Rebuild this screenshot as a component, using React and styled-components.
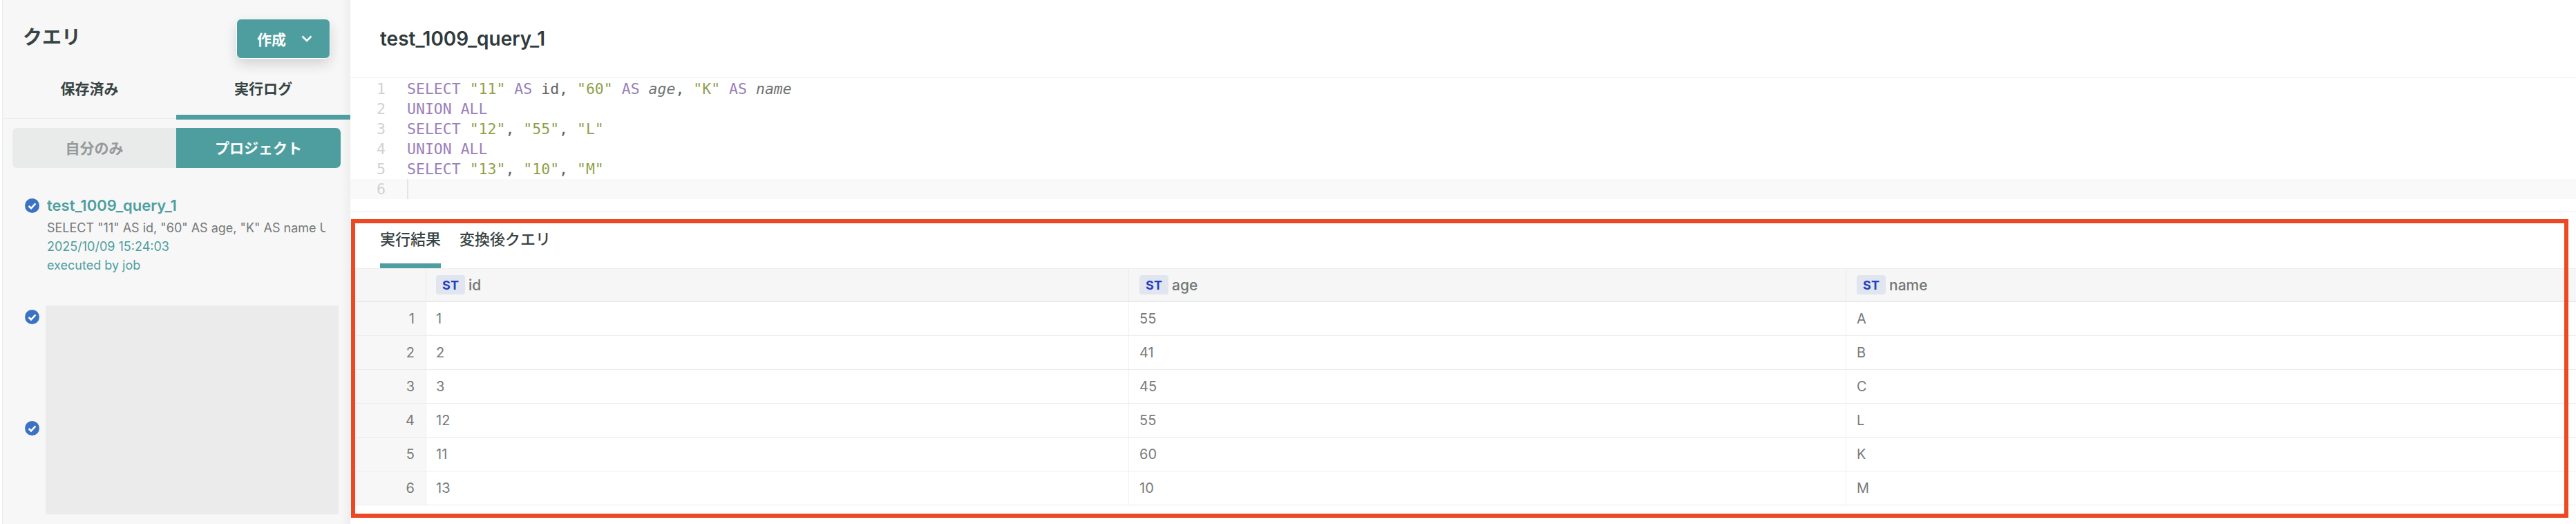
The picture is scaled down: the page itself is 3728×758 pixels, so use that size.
import React from 'react'
import styled, { createGlobalStyle } from 'styled-components'

const TEAL = '#4e9ea0'
const FONT = `Inter, "Noto Sans CJK JP", sans-serif`

const GlobalStyle = createGlobalStyle`
  html, body {
    margin: 0;
    padding: 0;
    background: #fff;
    font-family: ${FONT};
  }
  * { box-sizing: border-box; }
`

const Page = styled.div`
  position: relative;
  width: 3728px;
  height: 758px;
  display: flex;
  overflow: hidden;
  background: #fff;
`

const Sidebar = styled.aside`
  width: 504px;
  margin-left: 3px;
  flex: none;
  background: #f7f7f7;
  border-left: 1px solid #e9eded;
  box-shadow: inset -20px 0 14px -16px rgba(0, 0, 0, 0.05);
`

const SideHeader = styled.div`
  height: 85px;
  padding: 27px 29px 0 29px;
  display: flex;
  justify-content: space-between;
  align-items: flex-start;
`

const SideTitle = styled.h1`
  margin: 11px 0 0;
  font-size: 28px;
  line-height: 32px;
  font-weight: 700;
  color: #384343;
`

const CreateButton = styled.button`
  width: 136px;
  height: 58px;
  padding: 0 0 0 29px;
  display: flex;
  align-items: center;
  gap: 22px;
  border: 1px solid #fff;
  border-radius: 7px;
  background: ${TEAL};
  color: #fff;
  font-family: ${FONT};
  font-size: 21px;
  font-weight: 700;
  box-shadow: 0 8px 18px rgba(0, 0, 0, 0.14);
`

const SideTabs = styled.div`
  height: 87px;
  display: grid;
  grid-template-columns: 251px 252px;
  border-bottom: 1px solid #ebeded;
`

const SideTab = styled.div`
  display: flex;
  align-items: center;
  justify-content: center;
  padding-top: 3px;
  margin-bottom: -2px;
  font-size: 21px;
  font-weight: 700;
  color: #384343;
  border-bottom: 7px solid ${p => (p.$active ? TEAL : 'transparent')};
`

const Toggle = styled.div`
  margin: 13px 14px 0 14px;
  height: 58px;
  display: grid;
  grid-template-columns: 237px 238px;
`

const ToggleItem = styled.div`
  display: flex;
  align-items: center;
  justify-content: center;
  padding-bottom: 2px;
  font-size: 21px;
  font-weight: 700;
  background: ${p => (p.$active ? TEAL : '#e9ebeb')};
  color: ${p => (p.$active ? '#fff' : '#959a9a')};
  border-radius: ${p => (p.$active ? '0 7px 7px 0' : '7px 0 0 7px')};
`

const LogList = styled.div`
  position: relative;
  padding-top: 27px;
`

const LogItem = styled.div`
  height: 161px;
  padding: 13px 0 0 32px;
  display: flex;
  gap: 11px;
`

const StatusIcon = styled.svg`
  flex: none;
  width: 21px;
  height: 21px;
  margin-top: 4px;
`

const LogBody = styled.div`
  width: 403px;
  overflow: hidden;
`

const LogName = styled.div`
  margin-top: 1px;
  font-size: 22px;
  line-height: 27px;
  font-weight: 600;
  color: ${TEAL};
`

const LogLine = styled.div`
  margin-top: ${p => (p.$first ? '5px' : '0')};
  font-size: 18px;
  line-height: 27px;
  white-space: nowrap;
  color: ${p => (p.$accent ? TEAL : '#757878')};
`

const Redaction = styled.div`
  position: absolute;
  left: 62px;
  top: 199px;
  width: 424px;
  height: 302px;
  background: #ebebeb;
`

const Main = styled.main`
  flex: 1;
  min-width: 0;
  display: flex;
  flex-direction: column;
`

const MainHeader = styled.header`
  height: 113px;
  padding-left: 43px;
  display: flex;
  align-items: center;
  border-bottom: 1px solid #eeeeee;
`

const QueryTitle = styled.h2`
  margin: 0;
  font-size: 28px;
  font-weight: 600;
  color: #303a3a;
`

const Editor = styled.div`
  height: 194px;
  padding-top: 1px;
  border-bottom: 1px solid #eeeeee;
  font-family: "DejaVu Sans Mono", monospace;
  font-size: 21.5px;
  line-height: 29px;
`

const CodeRow = styled.div`
  height: 29px;
  display: flex;
  background: ${p => (p.$current ? '#f9f9f9' : 'transparent')};
`

const Gutter = styled.span`
  width: 82px;
  flex: none;
  padding-left: 38px;
  color: #d0d2d2;
`

const Code = styled.span`
  white-space: pre;
  color: #606464;
  border-left: ${p => (p.$current ? '2px solid #e4e4e4' : 'none')};
`

const Kw = styled.span`
  color: #9a80bb;
`

const Str = styled.span`
  color: #8f9f4b;
`

const Alias = styled.span`
  font-style: italic;
  color: #707474;
`

const ResultTabs = styled.div`
  height: 81px;
  padding-left: 43px;
  display: flex;
  gap: 27px;
`

const ResultTab = styled.div`
  height: 81px;
  padding-top: 25px;
  font-size: 22px;
  line-height: 28px;
  font-weight: 500;
  color: #384343;
  border-bottom: 7px solid ${p => (p.$active ? TEAL : 'transparent')};
`

const ResultGrid = styled.div`
  display: grid;
  grid-template-columns: 109px 1017px 1038px 1fr;
  grid-auto-rows: 49px;
`

const HeadCell = styled.div`
  display: flex;
  align-items: center;
  gap: 5px;
  padding-left: ${p => (p.$lead ? '14px' : '15px')};
  background: #f6f6f6;
  border-top: 1px solid #eeeeee;
  border-bottom: 2px solid #e9ebeb;
  border-left: ${p => (p.$corner ? 'none' : '1px solid #ebebeb')};
  font-size: 21px;
  font-weight: 500;
  color: #727676;
`

const TypeBadge = styled.span`
  width: 42px;
  height: 28px;
  display: flex;
  align-items: center;
  justify-content: center;
  border-radius: 4px;
  background: #e1e5f0;
  color: #2141bd;
  font-size: 18px;
  font-weight: 700;
`

const RowNumber = styled.div`
  display: flex;
  align-items: center;
  justify-content: flex-end;
  padding-right: 16px;
  background: #f7f7f7;
  border-bottom: 1px solid #ececec;
  font-size: 20px;
  color: #777b7b;
`

const Cell = styled.div`
  display: flex;
  align-items: center;
  padding-left: ${p => (p.$lead ? '14px' : '15px')};
  border-left: 1px solid #f0f0f0;
  border-bottom: 1px solid #ececec;
  font-size: 20px;
  color: #777b7b;
`

const Highlight = styled.div`
  position: absolute;
  left: 508px;
  top: 317px;
  width: 3209px;
  height: 432px;
  border: 6px solid #ee4823;
  pointer-events: none;
`

const Check = () => (
  <StatusIcon viewBox="0 0 21 21">
    <circle cx="10.5" cy="10.5" r="10.5" fill="#3b72c4" />
    <path d="M5.6 11l3.4 3.3 6.4-7" fill="none" stroke="#fff" strokeWidth="2.6" />
  </StatusIcon>
)

const Chevron = () => (
  <svg width="16" height="10" viewBox="0 0 16 10">
    <path d="M1.5 1.5L8 8l6.5-6.5" fill="none" stroke="#fff" strokeWidth="2.6" />
  </svg>
)

const rows = [
  ['1', '55', 'A'],
  ['2', '41', 'B'],
  ['3', '45', 'C'],
  ['12', '55', 'L'],
  ['11', '60', 'K'],
  ['13', '10', 'M'],
]

const codeLines = [
  <>
    <Kw>SELECT</Kw> <Str>"11"</Str> <Kw>AS</Kw> id, <Str>"60"</Str> <Kw>AS</Kw> <Alias>age</Alias>, <Str>"K"</Str> <Kw>AS</Kw> <Alias>name</Alias>
  </>,
  <Kw>UNION ALL</Kw>,
  <>
    <Kw>SELECT</Kw> <Str>"12"</Str>, <Str>"55"</Str>, <Str>"L"</Str>
  </>,
  <Kw>UNION ALL</Kw>,
  <>
    <Kw>SELECT</Kw> <Str>"13"</Str>, <Str>"10"</Str>, <Str>"M"</Str>
  </>,
  null,
]

export default function App() {
  return (
    <Page>
      <GlobalStyle />
      <Sidebar>
        <SideHeader>
          <SideTitle>クエリ</SideTitle>
          <CreateButton>
            作成
            <Chevron />
          </CreateButton>
        </SideHeader>
        <SideTabs>
          <SideTab>保存済み</SideTab>
          <SideTab $active>実行ログ</SideTab>
        </SideTabs>
        <Toggle>
          <ToggleItem>自分のみ</ToggleItem>
          <ToggleItem $active>プロジェクト</ToggleItem>
        </Toggle>
        <LogList>
          <LogItem>
            <Check />
            <LogBody>
              <LogName>test_1009_query_1</LogName>
              <LogLine $first>SELECT "11" AS id, "60" AS age, "K" AS name UNION ALL</LogLine>
              <LogLine $accent>2025/10/09 15:24:03</LogLine>
              <LogLine $accent>executed by job</LogLine>
            </LogBody>
          </LogItem>
          <LogItem>
            <Check />
          </LogItem>
          <LogItem>
            <Check />
          </LogItem>
          <Redaction />
        </LogList>
      </Sidebar>
      <Main>
        <MainHeader>
          <QueryTitle>test_1009_query_1</QueryTitle>
        </MainHeader>
        <Editor>
          {codeLines.map((line, i) => (
            <CodeRow key={i} $current={line === null}>
              <Gutter>{i + 1}</Gutter>
              <Code $current={line === null}>{line}</Code>
            </CodeRow>
          ))}
        </Editor>
        <ResultTabs>
          <ResultTab $active>実行結果</ResultTab>
          <ResultTab>変換後クエリ</ResultTab>
        </ResultTabs>
        <ResultGrid>
          <HeadCell $corner />
          {['id', 'age', 'name'].map((col, j) => (
            <HeadCell key={col} $lead={j === 0}>
              <TypeBadge>ST</TypeBadge>
              {col}
            </HeadCell>
          ))}
          {rows.map((row, i) => (
            <React.Fragment key={i}>
              <RowNumber>{i + 1}</RowNumber>
              {row.map((value, j) => (
                <Cell key={j} $lead={j === 0}>{value}</Cell>
              ))}
            </React.Fragment>
          ))}
        </ResultGrid>
      </Main>
      <Highlight />
    </Page>
  )
}
